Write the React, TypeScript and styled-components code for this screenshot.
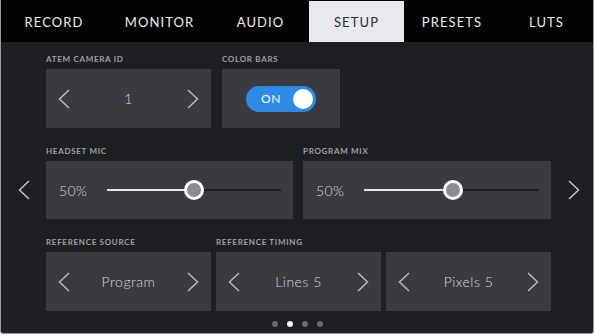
import React from "react"
import styled, { createGlobalStyle } from "styled-components"

const GlobalStyle = createGlobalStyle`
    html, body {
        margin: 0;
        padding: 0;
        background: #ffffff;
    }
    body {
        font-family: "Lato", "Open Sans", sans-serif;
    }
`

const Screen = styled.div`
    box-sizing: border-box;
    width: 594px;
    height: 334px;
    background: #1e1f23;
    border: 1px solid #9a9a9c;
    border-top: none;
    border-radius: 0 0 3px 3px;
    overflow: hidden;
    display: flex;
    flex-direction: column;
`

const TabBar = styled.div`
    display: grid;
    grid-template-columns: 106px 105px 97px 95px 96px 1fr;
    height: 42px;
    padding-top: 1px;
    box-sizing: border-box;
    background: #030303;
`

const Tab = styled.div<{ $active?: boolean }>`
    display: flex;
    align-items: center;
    justify-content: center;
    font-size: 13px;
    letter-spacing: 1.1px;
    color: ${(p) => (p.$active ? "#2b2c30" : "#ececec")};
    background: ${(p) => (p.$active ? "#e7e9ec" : "transparent")};
`

const Body = styled.div`
    display: grid;
    grid-template-columns: 45px 505px 1fr;
    row-gap: 18px;
    padding-top: 12px;
`

const Side = styled.div`
    display: flex;
    align-items: flex-end;
    justify-content: center;
`

const NavArrow = styled.div<{ $right?: boolean }>`
    height: 58px;
    display: flex;
    align-items: center;
    padding-left: ${(p) => (p.$right ? "3px" : "0")};
`

const Row = styled.div<{ $gap: number }>`
    display: flex;
    gap: ${(p) => p.$gap}px;
`

const Group = styled.div<{ $width: number }>`
    width: ${(p) => p.$width}px;
    display: flex;
    flex-direction: column;
`

const Label = styled.div`
    height: 11px;
    line-height: 11px;
    margin-bottom: 4px;
    font-size: 8px;
    font-weight: 700;
    letter-spacing: 0.7px;
    color: #9fa0a4;
    white-space: nowrap;
`

const Panel = styled.div<{ $height: number }>`
    height: ${(p) => p.$height}px;
    background: #3a3b40;
    display: flex;
    align-items: center;
    box-sizing: border-box;
`

const Stepper = styled(Panel)`
    justify-content: space-between;
    padding: 0 12px;
`

const Value = styled.span`
    font-size: 14px;
    font-weight: 300;
    letter-spacing: 0.5px;
    color: #d6d7d9;
`

const Toggle = styled.div`
    margin: 0 auto;
    width: 70px;
    height: 26px;
    border-radius: 13px;
    background: #2b8be6;
    display: flex;
    align-items: center;
    justify-content: space-between;
    padding: 0 3px 0 15px;
    box-sizing: border-box;
    color: #ffffff;
    font-size: 12px;
    letter-spacing: 0.6px;

    &::after {
        content: "";
        width: 20px;
        height: 20px;
        border-radius: 50%;
        background: #ffffff;
    }
`

const SliderPanel = styled(Panel)`
    padding: 0 12px 0 13px;
`

const Percent = styled.span`
    width: 48px;
    flex-shrink: 0;
    font-size: 14px;
    font-weight: 300;
    letter-spacing: 0.4px;
    color: #d6d7d9;
`

const Track = styled.div`
    position: relative;
    flex: 1;
    height: 2px;
    background: #1d1e22;
`

const Fill = styled.div`
    height: 100%;
    background: #e4e4e6;
`

const Knob = styled.div`
    position: absolute;
    top: 50%;
    width: 20px;
    height: 20px;
    box-sizing: border-box;
    border-radius: 50%;
    border: 3px solid #ffffff;
    background: #8b8c8f;
    transform: translate(-50%, -50%);
`

const Dots = styled.div`
    display: flex;
    justify-content: center;
    gap: 9px;
    margin-top: 10px;
`

const Dot = styled.div<{ $active?: boolean }>`
    width: 6px;
    height: 6px;
    border-radius: 50%;
    background: ${(p) => (p.$active ? "#f2f2f2" : "#6a6b6f")};
`

const Chevron: React.FC<{ dir: "left" | "right"; color?: string }> = ({ dir, color = "#b8b9bc" }) => (
    <svg width="12" height="20" viewBox="0 0 12 20">
        <polyline
            points={dir === "left" ? "11,1 1.5,10 11,19" : "1,1 10.5,10 1,19"}
            fill="none"
            stroke={color}
            strokeWidth="1.5"
        />
    </svg>
)

const StepBox: React.FC<{ value: string }> = ({ value }) => (
    <Stepper $height={59}>
        <Chevron dir="left" />
        <Value>{value}</Value>
        <Chevron dir="right" />
    </Stepper>
)

// knob position is a hair off the label on the program mix slider in the reference
const Slider: React.FC<{ percent: number; pos?: number }> = ({ percent, pos = percent }) => (
    <SliderPanel $height={58}>
        <Percent>{percent}%</Percent>
        <Track>
            <Fill style={{ width: `${pos}%` }} />
            <Knob style={{ left: `${pos}%` }} />
        </Track>
    </SliderPanel>
)

const tabs = ["RECORD", "MONITOR", "AUDIO", "SETUP", "PRESETS", "LUTS"]

export default function App() {
    return (
        <>
            <GlobalStyle />
            <Screen>
                <TabBar>
                    {tabs.map((t) => (
                        <Tab key={t} $active={t === "SETUP"}>{t}</Tab>
                    ))}
                </TabBar>
                <Body>
                    <Side />
                    <Row $gap={11}>
                        <Group $width={165}>
                            <Label>ATEM CAMERA ID</Label>
                            <StepBox value="1" />
                        </Group>
                        <Group $width={118}>
                            <Label>COLOR BARS</Label>
                            <Panel $height={59}>
                                <Toggle>ON</Toggle>
                            </Panel>
                        </Group>
                    </Row>
                    <Side />

                    <Side>
                        <NavArrow>
                            <Chevron dir="left" color="#c4c5c8" />
                        </NavArrow>
                    </Side>
                    <Row $gap={10}>
                        <Group $width={247}>
                            <Label>HEADSET MIC</Label>
                            <Slider percent={50} />
                        </Group>
                        <Group $width={248}>
                            <Label>PROGRAM MIX</Label>
                            <Slider percent={50} pos={51} />
                        </Group>
                    </Row>
                    <Side>
                        <NavArrow $right>
                            <Chevron dir="right" color="#c4c5c8" />
                        </NavArrow>
                    </Side>

                    <Side />
                    <Row $gap={5}>
                        <Group $width={165}>
                            <Label>REFERENCE SOURCE</Label>
                            <StepBox value="Program" />
                        </Group>
                        <Group $width={165}>
                            <Label>REFERENCE TIMING</Label>
                            <StepBox value="Lines 5" />
                        </Group>
                        <Group $width={165}>
                            <Label>&nbsp;</Label>
                            <StepBox value="Pixels 5" />
                        </Group>
                    </Row>
                    <Side />
                </Body>
                <Dots>
                    <Dot />
                    <Dot $active />
                    <Dot />
                    <Dot />
                </Dots>
            </Screen>
        </>
    )
}
